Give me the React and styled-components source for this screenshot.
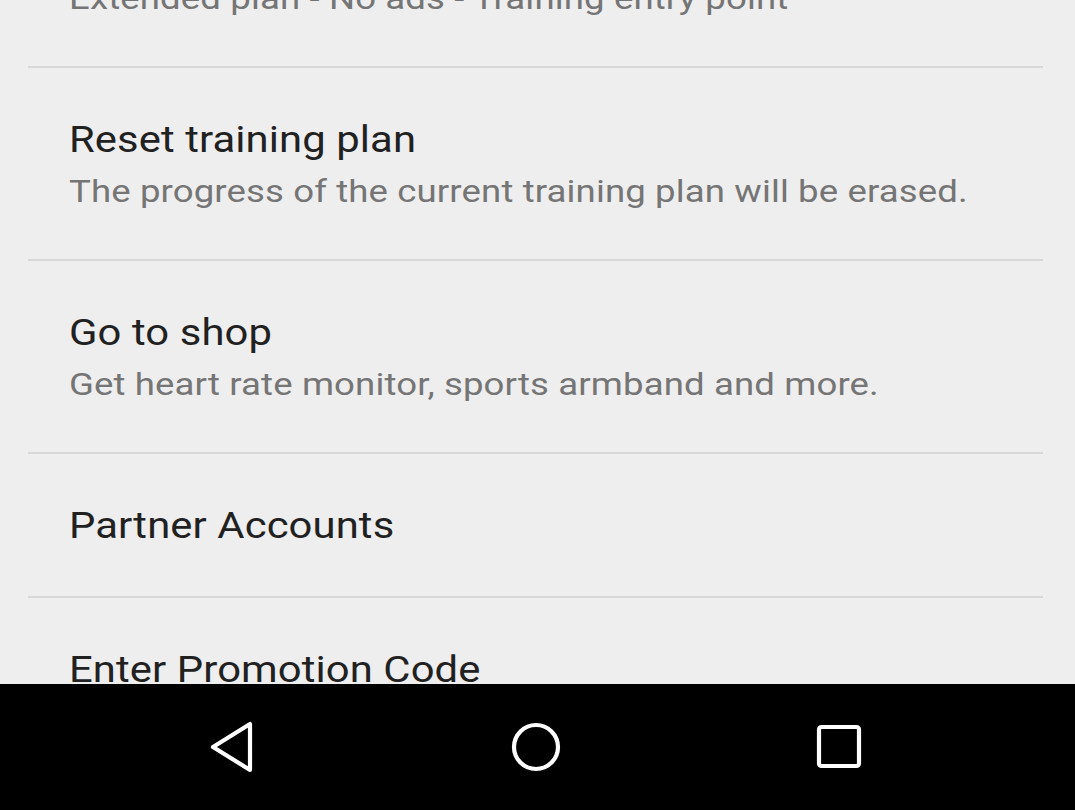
import React from "react";
import styled, { createGlobalStyle } from "styled-components";

const GlobalStyle = createGlobalStyle`
  html, body {
    margin: 0;
    padding: 0;
    background: #eeeeee;
  }
  body {
    font-family: Roboto, "Noto Sans", "Liberation Sans", sans-serif;
    -webkit-font-smoothing: antialiased;
  }
`;

const Screen = styled.div`
  width: 1075px;
  height: 810px;
  display: flex;
  flex-direction: column;
  overflow: hidden;
  background: #eeeeee;
`;

const Viewport = styled.div`
  flex: 1;
  overflow: hidden;
`;

/* list is scrolled: first item sits partly above the top edge */
const List = styled.ul`
  list-style: none;
  margin: -125px 0 0;
  padding: 0;
`;

const Item = styled.li`
  margin: 0 32px 0 28px;
  padding: ${(p) => (p.$single ? "46px 0 44px 41px" : "46px 0 41px 41px")};
  border-bottom: 2px solid #d8d8d8;
  display: flex;
  flex-direction: column;
`;

/* the device screenshot is a bit stretched horizontally */
const Title = styled.div`
  font-size: 36px;
  line-height: 52px;
  letter-spacing: 0.1px;
  color: #212121;
  white-space: nowrap;
  transform: scaleX(1.16);
  transform-origin: left center;
`;

const Summary = styled.div`
  font-size: 31px;
  line-height: 52px;
  letter-spacing: 0.1px;
  color: #757575;
  white-space: nowrap;
  transform: scaleX(1.18);
  transform-origin: left center;
`;

const NavBar = styled.nav`
  height: 126px;
  flex-shrink: 0;
  background: #000;
  display: flex;
  align-items: center;
  justify-content: space-between;
  padding: 0 201px 0 197px;
`;

const NavButton = styled.button`
  width: 70px;
  height: 70px;
  border: 0;
  padding: 0;
  background: transparent;
  display: flex;
  align-items: center;
  justify-content: center;
  svg {
    display: block;
  }
`;

const BackIcon = () => (
  <svg width="48" height="56" viewBox="0 0 48 56">
    <path
      d="M42 5 L42 51 L5 28 Z"
      fill="none"
      stroke="#fff"
      strokeWidth="4.2"
      strokeLinejoin="round"
    />
  </svg>
);

const HomeIcon = () => (
  <svg width="52" height="52" viewBox="0 0 52 52">
    <circle cx="26" cy="26" r="22" fill="none" stroke="#fff" strokeWidth="4.2" />
  </svg>
);

const RecentsIcon = () => (
  <svg width="50" height="50" viewBox="0 0 50 50">
    <rect
      x="5"
      y="5"
      width="40"
      height="39"
      rx="2.5"
      fill="none"
      stroke="#fff"
      strokeWidth="4.2"
    />
  </svg>
);

const items = [
  { title: "Upgrade", summary: "Extended plan - No ads - Training entry point" },
  {
    title: "Reset training plan",
    summary: "The progress of the current training plan will be erased.",
  },
  {
    title: "Go to shop",
    summary: "Get heart rate monitor, sports armband and more.",
  },
  { title: "Partner Accounts" },
  { title: "Enter Promotion Code" },
];

export default function App() {
  return (
    <Screen>
      <GlobalStyle />
      <Viewport>
        <List>
          {items.map((item) => (
            <Item key={item.title} $single={!item.summary}>
              <Title>{item.title}</Title>
              {item.summary && <Summary>{item.summary}</Summary>}
            </Item>
          ))}
        </List>
      </Viewport>
      <NavBar>
        <NavButton aria-label="Back">
          <BackIcon />
        </NavButton>
        <NavButton aria-label="Home">
          <HomeIcon />
        </NavButton>
        <NavButton aria-label="Recents">
          <RecentsIcon />
        </NavButton>
      </NavBar>
    </Screen>
  );
}
